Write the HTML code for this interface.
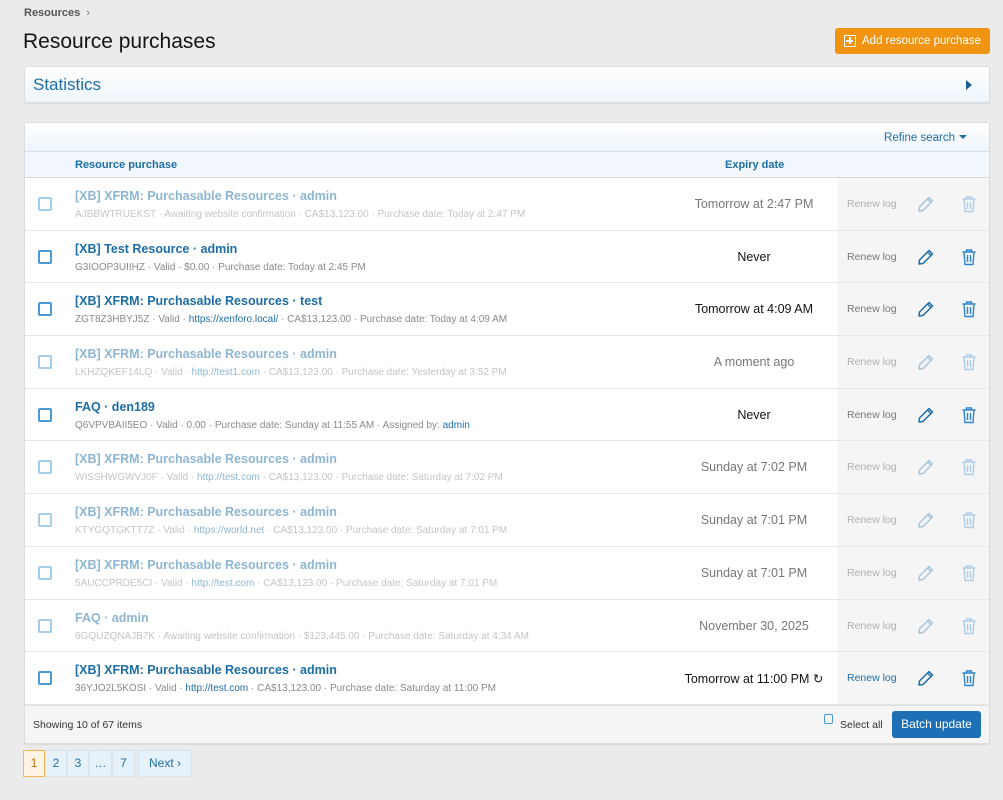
<!DOCTYPE html>
<html><head><meta charset="utf-8"><style>
*{box-sizing:border-box;margin:0;padding:0}
body{width:1003px;height:800px;background:#ebebeb;font-family:"Liberation Sans",sans-serif;color:#141414;position:relative;overflow:hidden}
.crumb{position:absolute;left:24px;top:7px;font-size:11px;color:#555;font-weight:bold}
.crumb span{font-weight:normal;margin-left:6px;color:#777}
h1{position:absolute;left:23px;top:30px;font-size:21px;font-weight:normal;color:#141414}
.add{position:absolute;left:835px;top:28px;width:155px;height:26px;background:#f19412;border-radius:3px;color:#fff;font-size:11.5px;line-height:26px;padding-left:27px;white-space:nowrap}
.add i{position:absolute;left:9px;top:7px;width:12px;height:12px;border:1.5px solid #fff;border-radius:1px}
.add i:before{content:"";position:absolute;left:4px;top:1px;width:1.5px;height:7px;background:#fff}
.add i:after{content:"";position:absolute;left:1px;top:4px;width:7px;height:1.5px;background:#fff}
.stats{position:absolute;left:24px;top:66px;width:966px;height:37px;background:linear-gradient(#fff,#edf5fc);border:1px solid #dcdcdc;border-radius:3px;box-shadow:0 1px 1px rgba(0,0,0,.08)}
.stats b{position:absolute;left:8px;top:8px;font-size:17px;font-weight:normal;color:#1d6ea7}
.stats .tri{position:absolute;right:17px;top:13px;border-left:6px solid #1d5f92;border-top:5px solid transparent;border-bottom:5px solid transparent}
.main{position:absolute;left:24px;top:122px;width:966px;height:622px;background:#fff;border:1px solid #dcdcdc;border-radius:3px;overflow:hidden;box-shadow:0 1px 1px rgba(0,0,0,.08)}
.top{height:29px;background:linear-gradient(#fff,#eef5fb);border-bottom:1px solid #d3e3f0;position:relative}
.top span{position:absolute;right:22px;top:9px;font-size:11.5px;color:#1d6ea7}
.top span:after{content:"";display:inline-block;margin-left:4px;vertical-align:2px;border-top:4px solid #1d6ea7;border-left:4px solid transparent;border-right:4px solid transparent}
.colh{height:26px;background:#f1f7fc;border-bottom:1px solid #d8d8d8;position:relative;font-size:11px;font-weight:bold;color:#1d6ea7}
.colh .a{position:absolute;left:50px;top:7px}.colh .b{position:absolute;left:700px;top:7px}
.row{height:52.7px;border-bottom:1px solid #e6e6e6;position:relative}
.cb{position:absolute;left:13px;top:19px;width:14px;height:14px;border:2px solid #4a9ad8;border-radius:2px}
.t{position:absolute;left:50px;top:11px;font-size:12.5px;font-weight:bold;color:#1d6ea7;white-space:nowrap}
.m{position:absolute;left:50px;top:31px;font-size:10px;color:#8a8a8a;white-space:nowrap}
.m a{color:#1d6ea7;text-decoration:none}
.e{position:absolute;left:600px;width:258px;text-align:center;top:19px;font-size:12.5px;color:#141414}
.act{position:absolute;left:813px;top:0;width:153px;height:100%;background:#f5f5f5}
.rl{position:absolute;left:9px;top:20px;font-size:10.5px;color:#777}
.pen{position:absolute;left:79px;top:17px}
.bin{position:absolute;left:123px;top:17px}
.dim .t,.dim .m,.dim .cb{opacity:.5}
.dim .e{color:#777}
.dim .rl{color:#b0b0b0}
.dim .pen,.dim .bin{opacity:.35}
.foot{position:absolute;left:0;bottom:0;width:100%;height:38px;background:#f5f5f5;border-top:1px solid #e0e0e0}
.foot .s{position:absolute;left:8px;top:13px;font-size:10.5px;color:#333}
.foot .sa{position:absolute;left:815px;top:13px;font-size:10.5px;color:#333}
.foot .sa i{position:absolute;left:-16px;top:-5px;width:9px;height:10px;border:1.5px solid #4a9ad8;border-radius:2px}
.foot .bu{position:absolute;left:867px;top:5px;width:89px;height:27px;background:#1d70b6;color:#fff;font-size:12px;line-height:27px;text-align:center;border-radius:3px}
.pg{position:absolute;top:750px;height:27px;border:1px solid #d8e4ee;background:#e6f1fa;color:#1d6ea7;font-size:12px;line-height:25px;text-align:center}
</style></head><body>
<div class="crumb">Resources<span>›</span></div>
<h1>Resource purchases</h1>
<div class="add"><i></i>Add resource purchase</div>
<div class="stats"><b>Statistics</b><div class="tri"></div></div>
<div class="main">
<div class="top"><span>Refine search</span></div>
<div class="colh"><span class="a">Resource purchase</span><span class="b">Expiry date</span></div>
<div id="rows"></div>
<div class="foot"><span class="s">Showing 10 of 67 items</span><span class="sa"><i></i>Select all</span><div class="bu">Batch update</div></div>
</div>
<div class="pg" style="left:23px;width:22px;border-color:#f0b45a;background:#fdf3e4;color:#c46f00">1</div>
<div class="pg" style="left:45px;width:22px">2</div>
<div class="pg" style="left:67px;width:22px">3</div>
<div class="pg" style="left:89px;width:23px">…</div>
<div class="pg" style="left:112px;width:23px">7</div>
<div class="pg" style="left:138px;width:54px">Next ›</div>
<script>
var P='<svg class="pen" width="18" height="18" viewBox="0 0 18 18"><path d="M12 2.5l3.5 3.5L6 15.5 2 16l.5-4z M10.5 4l3.5 3.5" fill="none" stroke="#1d6ea7" stroke-width="1.5" stroke-linejoin="round"/></svg>';
var B='<svg class="bin" width="16" height="18" viewBox="0 0 16 18"><path d="M1.5 4h13M5.5 4V2h5v2M3 4l1 12.5h8L13 4M6.5 7v7M9.5 7v7" fill="none" stroke="#2d86cf" stroke-width="1.4"/></svg>';
var d=[
[1,'[XB] XFRM: Purchasable Resources · admin','AJBBWTRUEKST · Awaiting website confirmation · CA$13,123.00 · Purchase date: Today at 2:47 PM','Tomorrow at 2:47 PM'],
[0,'[XB] Test Resource · admin','G3IOOP3UIIHZ · Valid · $0.00 · Purchase date: Today at 2:45 PM','Never'],
[0,'[XB] XFRM: Purchasable Resources · test','ZGT8Z3HBYJ5Z · Valid · <a>https://xenforo.local/</a> · CA$13,123.00 · Purchase date: Today at 4:09 AM','Tomorrow at 4:09 AM'],
[1,'[XB] XFRM: Purchasable Resources · admin','LKHZQKEF14LQ · Valid · <a>http://test1.com</a> · CA$13,123.00 · Purchase date: Yesterday at 3:52 PM','A moment ago'],
[0,'FAQ · den189','Q6VPVBAII5EO · Valid · 0.00 · Purchase date: Sunday at 11:55 AM · Assigned by: <a>admin</a>','Never'],
[1,'[XB] XFRM: Purchasable Resources · admin','WISSHWGWVJ0F · Valid · <a>http://test.com</a> · CA$13,123.00 · Purchase date: Saturday at 7:02 PM','Sunday at 7:02 PM'],
[1,'[XB] XFRM: Purchasable Resources · admin','KTYGQTGKTT7Z · Valid · <a>https://world.net</a> · CA$13,123.00 · Purchase date: Saturday at 7:01 PM','Sunday at 7:01 PM'],
[1,'[XB] XFRM: Purchasable Resources · admin','5AUCCPRDE5CI · Valid · <a>http://test.com</a> · CA$13,123.00 · Purchase date: Saturday at 7:01 PM','Sunday at 7:01 PM'],
[1,'FAQ · admin','6GQUZQNAJB7K · Awaiting website confirmation · $123,445.00 · Purchase date: Saturday at 4:34 AM','November 30, 2025'],
[0,'[XB] XFRM: Purchasable Resources · admin','36YJO2L5KOSI · Valid · <a>http://test.com</a> · CA$13,123.00 · Purchase date: Saturday at 11:00 PM','Tomorrow at 11:00 PM ↻']];
var h='';d.forEach(function(r,i){h+='<div class="row'+(r[0]?' dim':'')+'"><div class="cb"></div><div class="t">'+r[1]+'</div><div class="m">'+r[2]+'</div><div class="e">'+r[3]+'</div><div class="act"><span class="rl"'+(i==9?' style="color:#1d6ea7"':'')+'>Renew log</span>'+P+B+'</div></div>';});
document.getElementById('rows').innerHTML=h;
</script>
</body></html>
